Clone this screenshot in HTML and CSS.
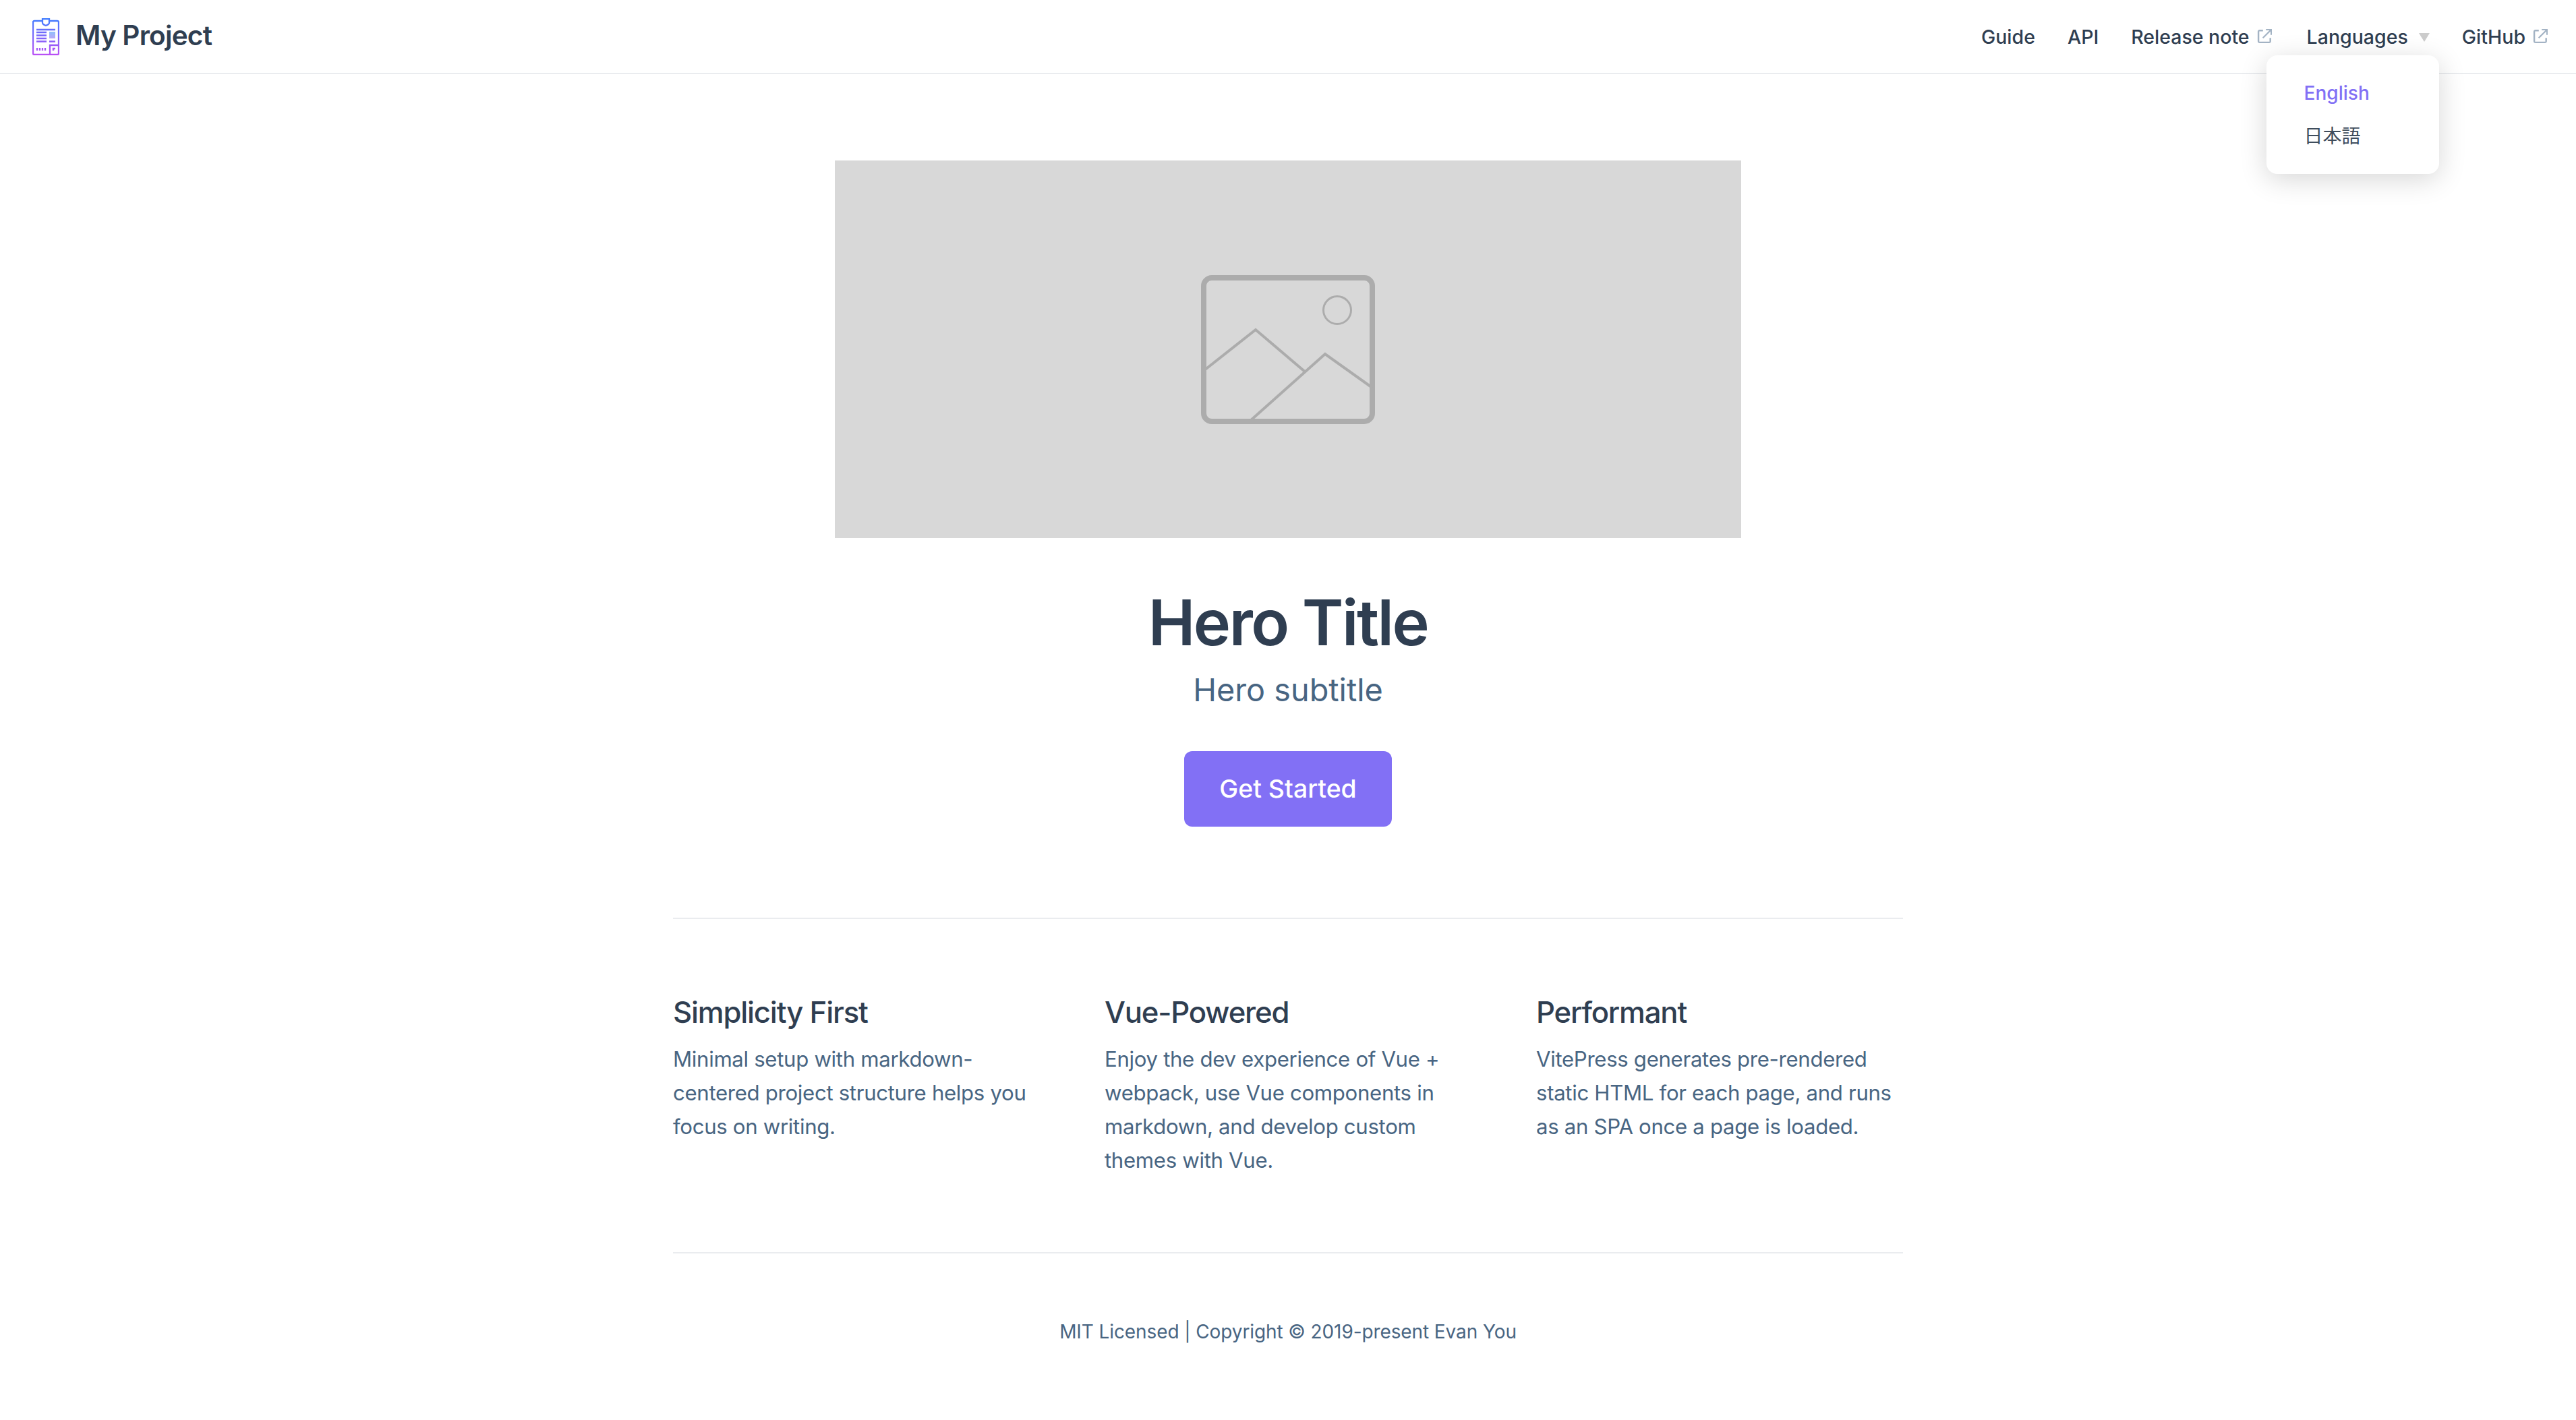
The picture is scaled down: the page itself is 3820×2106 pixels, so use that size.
FILE: index.html
```html
<!DOCTYPE html>
<html lang="en">
<head>
  <meta charset="UTF-8">
  <title>My Project</title>
  <link rel="stylesheet" href="styles.css">
</head>
<body>
  <header class="nav">
    <a class="brand" href="#">
      <svg class="brand-logo" viewBox="0 0 40 55" width="40" height="55">
        <defs>
          <linearGradient id="logoGrad" gradientUnits="userSpaceOnUse" x1="0" y1="0" x2="0" y2="55">
            <stop offset="0" stop-color="#3f7dff"/>
            <stop offset="1" stop-color="#bb4ff5"/>
          </linearGradient>
          <linearGradient id="logoPic" x1="0" y1="0" x2="0" y2="1">
            <stop offset="0" stop-color="#8fc0fb"/>
            <stop offset="1" stop-color="#b9a8f8"/>
          </linearGradient>
        </defs>
        <g fill="none" stroke="url(#logoGrad)" stroke-width="2.300">
          <path d="M15 4H3Q1 4 1 6V52Q1 54 3 54H37Q39 54 39 52V6Q39 4 37 4H25"/>
          <path d="M15 1H25V7Q25 9 20 11Q15 9 15 7Z"/>
          <path d="M6 17H34M6 21H21M6 25.500H21M6 30H21M6 34.500H21M25 34.500H34"/>
          <path d="M26 54V40H39"/>
          <path d="M7 44V48M11 44V48M15 44V48M19 44V48"/>
          <path d="M31 48V45H34" stroke-width="2.500"/>
        </g>
        <rect x="25" y="20" width="9" height="10" fill="url(#logoPic)"/>
      </svg>
      <span class="brand-name">My Project</span>
    </a>
    <nav class="nav-links">
      <a class="nav-link" href="#">Guide</a>
      <a class="nav-link" href="#">API</a>
      <a class="nav-link" href="#">Release note
        <svg class="ext-icon" viewBox="0 0 100 100" width="22" height="22"><path d="M18 5C9 5 4 11 4 19V82C4 90 10 96 18 96H81C89 96 95 90 95 82V60H84V85H15V16H40V5ZM60 0V9H84L36 57L43 64L91 16V40H100V0Z"/></svg>
      </a>
      <div class="nav-dropdown">
        <a class="nav-link" href="#">Languages<span class="caret"></span></a>
        <ul class="dropdown-menu">
          <li class="dropdown-item active">English</li>
          <li class="dropdown-item">日本語</li>
        </ul>
      </div>
      <a class="nav-link" href="#">GitHub
        <svg class="ext-icon" viewBox="0 0 100 100" width="22" height="22"><path d="M18 5C9 5 4 11 4 19V82C4 90 10 96 18 96H81C89 96 95 90 95 82V60H84V85H15V16H40V5ZM60 0V9H84L36 57L43 64L91 16V40H100V0Z"/></svg>
      </a>
    </nav>
  </header>

  <main class="home">
    <section class="hero">
      <div class="hero-image">
        <svg viewBox="0 0 258 221" width="258" height="221" fill="none" stroke="#acacac">
          <rect x="4" y="4" width="250" height="213" rx="12" stroke-width="8"/>
          <circle cx="202" cy="52" r="20.500" stroke-width="3"/>
          <path d="M5 141L81 81L155 144" stroke-width="4"/>
          <path d="M73 216L184 117L254 167" stroke-width="4"/>
        </svg>
      </div>
      <h1 class="hero-title">Hero Title</h1>
      <p class="hero-subtitle">Hero subtitle</p>
      <a class="hero-action" href="#">Get Started</a>
    </section>

    <section class="features">
      <div class="feature">
        <h2>Simplicity First</h2>
        <p>Minimal setup with markdown-centered project structure helps you focus on writing.</p>
      </div>
      <div class="feature">
        <h2>Vue-Powered</h2>
        <p>Enjoy the dev experience of Vue + webpack, use Vue components in markdown, and develop custom themes with Vue.</p>
      </div>
      <div class="feature">
        <h2>Performant</h2>
        <p>VitePress generates pre-rendered static HTML for each page, and runs as an SPA once a page is loaded.</p>
      </div>
    </section>

    <footer class="footer">MIT Licensed | Copyright © 2019-present Evan You</footer>
  </main>
</body>
</html>
```

FILE: styles.css
```css
* {
  box-sizing: border-box;
}

body {
  margin: 0;
  background-color: white;
  color: #2f3e51;
  font-family: Inter, 'Noto Sans CJK JP', sans-serif;
}

a {
  color: inherit;
  text-decoration: none;
}

.nav {
  display: flex;
  align-items: center;
  justify-content: space-between;
  height: 110px;
  padding: 0 42px 0 48px;
  border-bottom: 2px solid #eaecef;
}

.brand {
  display: flex;
  align-items: center;
  gap: 24px;
}

.brand-logo {
  display: block;
}

.brand-name {
  padding-bottom: 3px;
  font-size: 40.500px;
  font-weight: 600;
  letter-spacing: -0.8px;
}

.nav-links {
  display: flex;
  align-items: center;
  gap: 48px;
}

.nav-link {
  display: flex;
  align-items: center;
  gap: 11px;
  font-size: 28.500px;
  font-weight: 500;
  white-space: nowrap;
}

.ext-icon {
  fill: #a3b3c4;
}

.nav-dropdown {
  position: relative;
  margin-left: 4px;
}

.caret {
  width: 0;
  height: 0;
  margin: 3px 0 0 5px;
  border-top: 13px solid #cccccc;
  border-left: 8px solid transparent;
  border-right: 8px solid transparent;
}

.dropdown-menu {
  position: absolute;
  top: 45px;
  left: -60px;
  width: 256px;
  height: 176px;
  margin: 0;
  padding: 24px 0;
  list-style: none;
  background-color: white;
  border-radius: 16px;
  box-shadow: 0 8px 40px rgba(0, 0, 0, 0.16);
}

.dropdown-item {
  padding: 0 56px;
  font-size: 28px;
  line-height: 64px;
  color: #3f4d5c;
}

.dropdown-item.active {
  color: #8270f5;
  font-weight: 500;
}

.home {
  width: 1824px;
  margin: 0 auto;
}

.hero {
  display: flex;
  flex-direction: column;
  align-items: center;
  padding-top: 128px;
  padding-bottom: 135px;
  border-bottom: 2px solid #eaecef;
}

.hero-image {
  display: flex;
  align-items: center;
  justify-content: center;
  width: 1344px;
  height: 560px;
  background-color: #d8d8d8;
}

.hero-title {
  margin: 65px 0 0;
  font-size: 93.500px;
  line-height: 120px;
  font-weight: 600;
  letter-spacing: -2.500px;
}

.hero-subtitle {
  margin: 9px 0 0;
  font-size: 46.800px;
  line-height: 62px;
  color: #486582;
}

.hero-action {
  margin-top: 60px;
  padding: 0 52px;
  font-size: 37.400px;
  font-weight: 500;
  line-height: 112px;
  color: white;
  background-color: #8270f5;
  border-radius: 12px;
}

.features {
  display: flex;
  gap: 96px;
  padding: 80px 0 111px;
  border-bottom: 2px solid #eaecef;
}

.feature {
  flex: 1;
}

.feature h2 {
  margin: 29px 0 0;
  font-size: 43.700px;
  line-height: 60px;
  font-weight: 500;
  letter-spacing: -1.200px;
}

.feature p {
  margin: 14px 0 0;
  font-size: 31.200px;
  line-height: 50px;
  letter-spacing: -0.33px;
  color: #486582;
}

.footer {
  padding: 99px 0 93px;
  text-align: center;
  font-size: 28px;
  letter-spacing: -0.1px;
  color: #486582;
}
```
